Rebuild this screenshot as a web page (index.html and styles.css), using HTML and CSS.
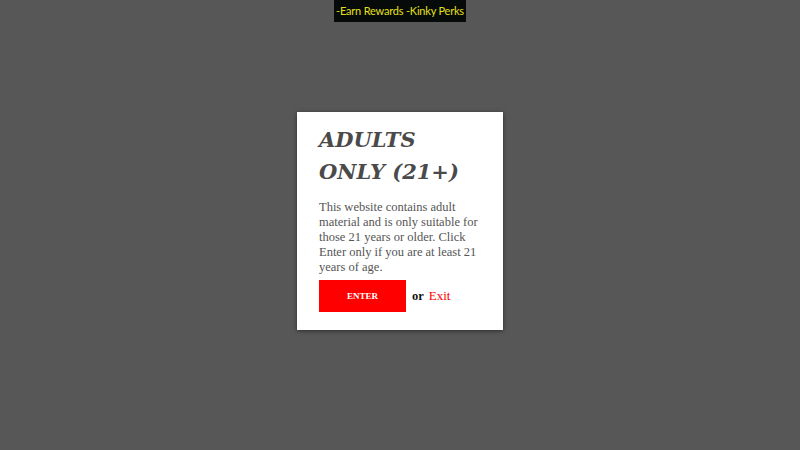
FILE: index.html
```html
<!DOCTYPE html>
<html>
<head>
<meta charset="utf-8">
<link rel="stylesheet" href="styles.css">
</head>
<body>
<div class="topbar"><span class="promo">-Earn Rewards -Kinky Perks</span></div>
<div class="overlay">
  <div class="modal">
    <h1 class="title">ADULTS ONLY (21+)</h1>
    <p class="text">This website contains adult material and is only suitable for those 21 years or older. Click Enter only if you are at least 21 years of age.</p>
    <div class="actions">
      <button class="enter">ENTER</button>
      <span class="or">or</span>
      <a class="exit" href="#">Exit</a>
    </div>
  </div>
</div>
</body>
</html>
```
FILE: styles.css
```css
html, body {
  margin: 0;
  padding: 0;
  height: 100%;
}
body {
  background: #575757;
  font-family: "Liberation Serif", serif;
}
.topbar {
  display: flex;
  justify-content: center;
}
.promo {
  background: #060a08;
  color: #e4e01c;
  font-family: "Lato", sans-serif;
  font-size: 11px;
  letter-spacing: -0.2px;
  line-height: 22px;
  padding: 0 2px;
}
.overlay {
  display: flex;
  justify-content: center;
  padding-top: 90px;
}
.modal {
  background: #fff;
  width: 162px;
  padding: 12px 22px 18px 22px;
  box-shadow: 0 1px 4px rgba(0,0,0,0.5);
}
.title {
  margin: 0 0 12px 0;
  font-family: "DejaVu Serif", serif;
  font-weight: bold;
  font-style: italic;
  font-size: 21px;
  line-height: 32px;
  color: #4a4a4a;
}
.text {
  margin: 0 0 5px 0;
  font-size: 12.5px;
  line-height: 15px;
  color: #555;
}
.actions {
  display: flex;
  align-items: center;
}
.enter {
  width: 87px;
  height: 32px;
  border: none;
  background: #ff0000;
  color: #fff;
  font-family: "Liberation Serif", serif;
  font-weight: bold;
  font-size: 9px;
  padding: 0;
}
.or {
  margin-left: 6px;
  font-weight: bold;
  font-size: 12.5px;
  color: #111;
}
.exit {
  margin-left: 5px;
  font-size: 13px;
  color: #ff0000;
  text-decoration: none;
}
```
